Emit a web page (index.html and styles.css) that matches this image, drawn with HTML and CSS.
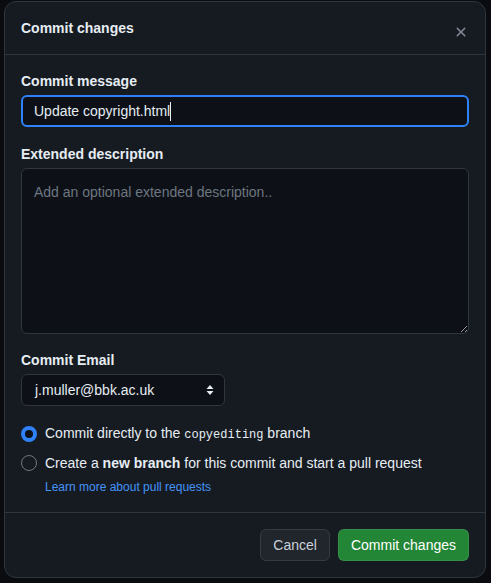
FILE: index.html
```html
<!DOCTYPE html>
<html lang="en">
<head>
<meta charset="utf-8">
<title>Commit changes</title>
<link rel="stylesheet" href="styles.css">
</head>
<body>
<div class="dialog">
  <div class="dialog-header">
    <h1 class="dialog-title">Commit changes</h1>
    <button class="close-btn" aria-label="Close">
      <svg width="16" height="16" viewBox="0 0 16 16"><path d="M3.72 3.72a.75.75 0 0 1 1.06 0L8 6.94l3.22-3.22a.75.75 0 1 1 1.06 1.06L9.06 8l3.22 3.22a.75.75 0 1 1-1.06 1.06L8 9.06l-3.22 3.22a.75.75 0 0 1-1.06-1.06L6.94 8 3.72 4.78a.75.75 0 0 1 0-1.06Z" fill="#848d97"/></svg>
    </button>
  </div>
  <div class="dialog-body">
    <div class="field field-first">
      <label class="label">Commit message</label>
      <div class="text-input focused"><span>Update copyright.html</span><span class="caret"></span></div>
    </div>
    <div class="field">
      <label class="label">Extended description</label>
      <textarea class="textarea" placeholder="Add an optional extended description.."></textarea>
    </div>
    <div class="field">
      <label class="label">Commit Email</label>
      <div class="select">
        <span>j.muller@bbk.ac.uk</span>
        <svg width="8" height="12" viewBox="0 0 8 12"><path d="M4 1 7.5 5h-7Z M4 11 .5 7h7Z" fill="#e6edf3"/></svg>
      </div>
    </div>
    <div class="radios">
      <div class="radio-row">
        <span class="radio checked"></span>
        <span>Commit directly to the <code>copyediting</code> branch</span>
      </div>
      <div class="radio-group">
        <div class="radio-row">
          <span class="radio"></span>
          <span>Create a <strong>new branch</strong> for this commit and start a pull request</span>
        </div>
        <a class="link" href="#">Learn more about pull requests</a>
      </div>
    </div>
  </div>
  <div class="dialog-footer">
    <button class="btn">Cancel</button>
    <button class="btn btn-primary">Commit changes</button>
  </div>
</div>
</body>
</html>
```
FILE: styles.css
```css
* { box-sizing: border-box; }
html, body { margin: 0; padding: 0; }
body {
  background: #0a0c10;
  font-family: "Liberation Sans", Arial, sans-serif;
  font-size: 14px;
  color: #e6edf3;
  width: 491px;
  height: 583px;
  overflow: hidden;
}
.dialog {
  margin: 1px 5px 0 4px;
  width: 482px;
  height: 577px;
  background: #161b22;
  border: 1px solid #30363d;
  border-radius: 12px;
  display: flex;
  flex-direction: column;
}
.dialog-header {
  display: flex;
  align-items: flex-start;
  justify-content: space-between;
  padding: 16px 8px 16px 16px;
  border-bottom: 1px solid #30363d;
  height: 53px;
}
.dialog-title {
  margin: 0;
  font-size: 14px;
  line-height: 20px;
  font-weight: 700;
  color: #e6edf3;
}
.close-btn {
  width: 32px;
  height: 32px;
  margin-top: -2px;
  background: transparent;
  border: 0;
  padding: 0;
  display: flex;
  align-items: center;
  justify-content: center;
  border-radius: 6px;
}
.dialog-body {
  padding: 16px 16px 16px 16px;
  display: flex;
  flex-direction: column;
  gap: 16px;
  border-bottom: 1px solid #30363d;
}
.field {
  display: flex;
  flex-direction: column;
  gap: 4px;
}
.field-first { margin-bottom: 1px; }
.label {
  font-weight: 700;
  font-size: 14px;
  line-height: 20px;
  color: #e6edf3;
}
.text-input {
  height: 32px;
  background: #0d1117;
  border: 2px solid #2f81f7;
  border-radius: 6px;
  padding: 0 11px;
  display: flex;
  align-items: center;
  line-height: 20px;
  color: #e6edf3;
}
.caret {
  display: inline-block;
  width: 1px;
  height: 19px;
  background: #e6edf3;
}
.textarea {
  height: 166px;
  background: #0d1117;
  border: 1px solid #30363d;
  border-radius: 6px;
  padding: 13px 12px;
  font-family: "Liberation Sans", Arial, sans-serif;
  font-size: 14px;
  line-height: 20px;
  color: #e6edf3;
  resize: vertical;
  outline: none;
  color-scheme: dark;
}
.textarea::placeholder { color: #6e7681; }
.select {
  width: 204px;
  height: 32px;
  background: #0d1117;
  border: 1px solid #30363d;
  border-radius: 6px;
  padding: 0 10px 0 13px;
  display: flex;
  align-items: center;
  justify-content: space-between;
  color: #e6edf3;
}
.radios {
  display: flex;
  flex-direction: column;
  gap: 8px;
  padding-top: 1px;
}
.radio-row {
  display: flex;
  align-items: center;
  gap: 8px;
  line-height: 20px;
  color: #e6edf3;
}
.radio {
  width: 16px;
  height: 16px;
  border-radius: 50%;
  border: 1px solid #6e7681;
  flex: none;
}
.radio.checked {
  border: 4px solid #2f81f7;
  background: #0d1117;
}
code {
  font-family: "Liberation Mono", "DejaVu Sans Mono", monospace;
  font-size: 12px;
}
strong { font-weight: 700; }
.radio-group {
  display: flex;
  flex-direction: column;
  gap: 5px;
}
.link {
  margin-left: 24px;
  font-size: 12px;
  line-height: 18px;
  color: #4493f8;
  text-decoration: none;
}
.dialog-footer {
  display: flex;
  justify-content: flex-end;
  gap: 8px;
  padding: 16px;
}
.btn {
  height: 32px;
  padding: 0 12px;
  border-radius: 6px;
  border: 1px solid #363b42;
  background: #21262d;
  color: #c9d1d9;
  font-family: "Liberation Sans", Arial, sans-serif;
  font-size: 14px;
  line-height: 20px;
}
.btn-primary {
  background: #238636;
  border-color: rgba(240, 246, 252, 0.1);
  color: #ffffff;
}
```
